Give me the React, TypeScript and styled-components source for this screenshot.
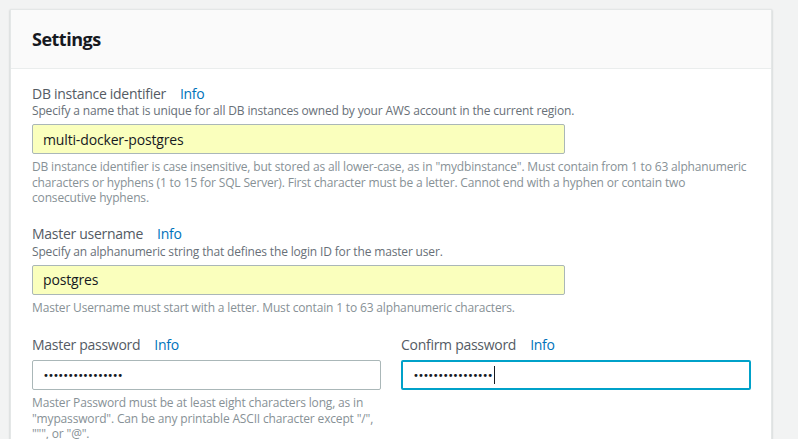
import { FC } from 'react';
import styled, { createGlobalStyle } from 'styled-components';

const GlobalStyle = createGlobalStyle`
  html, body {
    margin: 0;
    padding: 0;
    background: #f2f3f3;
  }
  body {
    font-family: 'Open Sans', 'Liberation Sans', sans-serif;
    -webkit-font-smoothing: antialiased;
  }
`;

const StyledPage = styled.div`
  width: 798px;
  height: 439px;
  overflow: hidden;
  padding: 9px 26px 0 10px;
  box-sizing: border-box;
`;

const StyledCard = styled.div`
  background: #ffffff;
  border: 1px solid #e4e7e7;
  box-shadow: 0 1px 2px rgba(0, 28, 36, 0.25);
`;

const StyledHeader = styled.div`
  height: 58px;
  padding: 0 21px;
  display: flex;
  align-items: center;
  background: #fafafa;
  border-bottom: 1px solid #eaeded;
`;

const StyledTitle = styled.h2`
  margin: 0;
  font-size: 18px;
  font-weight: 700;
  color: #16191f;
  letter-spacing: -0.5px;
`;

const StyledBody = styled.div`
  padding: 14px 20px 0 21px;
  display: flex;
  flex-direction: column;
`;

const StyledField = styled.div<{ $gap?: number }>`
  display: flex;
  flex-direction: column;
  margin-top: ${(p) => p.$gap ?? 0}px;
`;

const StyledLabelRow = styled.div`
  display: flex;
  align-items: center;
  gap: 14px;
  height: 20px;
  font-size: 14px;
  letter-spacing: -0.28px;
  color: #545b64;
`;

const StyledInfo = styled.a`
  color: #0073bb;
  text-decoration: none;
  font-size: 14px;
`;

const StyledDescription = styled.div`
  font-size: 12px;
  line-height: 16px;
  letter-spacing: -0.16px;
  color: #687078;
`;

const StyledInput = styled.div<{ $width?: number; $filled?: boolean; $focus?: boolean }>`
  width: ${(p) => (p.$width ? `${p.$width}px` : '100%')};
  height: 30px;
  box-sizing: border-box;
  margin-top: ${(p) => (p.$filled ? 5 : 6)}px;
  display: flex;
  align-items: center;
  padding: 0 10px;
  background: ${(p) => (p.$filled ? '#faffbd' : '#ffffff')};
  border: ${(p) => (p.$focus ? '2px solid #00a1c9' : '1px solid #aab7b8')};
  border-radius: 2px;
  font-size: 14px;
  letter-spacing: -0.15px;
  color: #16191f;
`;

const StyledDots = styled.span`
  font-family: 'DejaVu Sans', sans-serif;
  font-size: 10px;
  letter-spacing: -0.95px;
  color: #16191f;
`;

const StyledCaret = styled.span`
  display: inline-block;
  width: 1px;
  height: 18px;
  background: #16191f;
  margin-left: 2px;
`;

const StyledHint = styled.div`
  margin-top: 5px;
  font-size: 12px;
  line-height: 15.5px;
  letter-spacing: -0.16px;
  color: #879196;
`;

const StyledColumns = styled.div`
  display: grid;
  grid-template-columns: 349px 350px;
  column-gap: 20px;
  margin-top: 19px;
`;

const dots = '\u2022'.repeat(16);

const App: FC = () => {
  return (
    <StyledPage>
      <GlobalStyle />
      <StyledCard>
        <StyledHeader>
          <StyledTitle>Settings</StyledTitle>
        </StyledHeader>
        <StyledBody>
          <StyledField>
            <StyledLabelRow>
              DB instance identifier <StyledInfo>Info</StyledInfo>
            </StyledLabelRow>
            <StyledDescription>
              Specify a name that is unique for all DB instances owned by your AWS account in the current region.
            </StyledDescription>
            <StyledInput $width={533} $filled>
              multi-docker-postgres
            </StyledInput>
            <StyledHint>
              DB instance identifier is case insensitive, but stored as all lower-case, as in "mydbinstance". Must
              contain from 1 to 63 alphanumeric characters or hyphens (1 to 15 for SQL Server). First character must be
              a letter. Cannot end with a hyphen or contain two consecutive hyphens.
            </StyledHint>
          </StyledField>

          <StyledField $gap={18}>
            <StyledLabelRow>
              Master username <StyledInfo>Info</StyledInfo>
            </StyledLabelRow>
            <StyledDescription>Specify an alphanumeric string that defines the login ID for the master user.</StyledDescription>
            <StyledInput $width={533} $filled>
              postgres
            </StyledInput>
            <StyledHint>Master Username must start with a letter. Must contain 1 to 63 alphanumeric characters.</StyledHint>
          </StyledField>

          <StyledColumns>
            <StyledField>
              <StyledLabelRow>
                Master password <StyledInfo>Info</StyledInfo>
              </StyledLabelRow>
              <StyledInput>
                <StyledDots>{dots}</StyledDots>
              </StyledInput>
              <StyledHint>
                Master Password must be at least eight characters long, as in "mypassword". Can be any printable ASCII
                character except "/", """, or "@".
              </StyledHint>
            </StyledField>
            <StyledField>
              <StyledLabelRow>
                Confirm password <StyledInfo>Info</StyledInfo>
              </StyledLabelRow>
              <StyledInput $focus>
                <StyledDots>{dots}</StyledDots>
                <StyledCaret />
              </StyledInput>
            </StyledField>
          </StyledColumns>
        </StyledBody>
      </StyledCard>
    </StyledPage>
  );
};

export default App;
